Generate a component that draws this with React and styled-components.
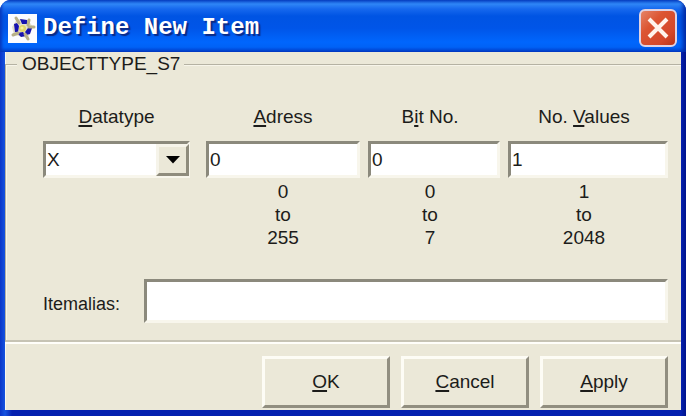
import React, { useState } from "react";
import styled, { createGlobalStyle } from "styled-components";

const GlobalStyle = createGlobalStyle`
  * {
    box-sizing: border-box;
  }

  body {
    margin: 0;
    background: #ffffff;
    color: #1c1c1a;
    font-family: "Liberation Sans", Arial, sans-serif;
    font-size: 19px;
    line-height: 24px;
  }

  input, select, button {
    font: inherit;
    color: inherit;
  }
`;

const columns = [
  { id: "address", label: ["", "A", "dress"], min: 0, max: 255 },
  { id: "bit", label: ["B", "i", "t No."], min: 0, max: 7, shifted: true },
  { id: "values", label: ["No. ", "V", "alues"], min: 1, max: 2048, shifted: true },
];

const actions = [
  ["", "O", "K"],
  ["", "C", "ancel"],
  ["", "A", "pply"],
];

const AccessText = ({ parts }) => (
  <span>
    {parts[0]}
    <Underlined>{parts[1]}</Underlined>
    {parts[2]}
  </span>
);

const AppIcon = () => (
  <svg width="29" height="29" viewBox="0 0 29 29" aria-hidden="true">
    <rect width="29" height="29" fill="#fbfcff" />
    <path d="M9 5 L20 6 L25 13 L20 24 L6 21 L4 13 Z" fill="#e4e0cc" />
    <path d="M12 5 L19 6 L20 10 L14 10 Z" fill="#1712b0" />
    <path d="M6 10 L9 9 L11 12 L10 18 L7 18 Z" fill="#1712b0" />
    <path d="M20 14 L24 14 L22 20 L18 21 L17 18 Z" fill="#1712b0" />
    <path d="M9 19 L15 18 L18 22 L13 23 Z" fill="#1712b0" />
    <path d="M8 4 L11 9 M21 6 L20 11 M26 13 L21 13 M20 25 L17 20 M5 21 L10 19" stroke="#b8b088" strokeWidth="3" strokeLinecap="round" />
    <circle cx="14.5" cy="14.5" r="3.5" fill="#e2d56c" />
    <circle cx="14" cy="14" r="1.6" fill="#f8f09c" />
  </svg>
);

const App = () => {
  const [datatype, setDatatype] = useState("X");
  const [values, setValues] = useState({ address: "0", bit: "0", values: "1" });
  const [alias, setAlias] = useState("");

  return (
    <>
      <GlobalStyle />
      <WindowStyled>
        <TitleBar>
          <AppIcon />
          <Title>Define New Item</Title>
          <CloseButton type="button" aria-label="Close">
            <svg width="22" height="22" viewBox="0 0 22 22">
              <path d="M2 2 L20 20 M20 2 L2 20" stroke="#fff4ec" strokeWidth="4" />
            </svg>
          </CloseButton>
        </TitleBar>

        <Body onSubmit={(e) => e.preventDefault()}>
          <Group>
            <Legend>OBJECTTYPE_S7</Legend>
            <Fields>
              <DatatypeField>
                <Label htmlFor="datatype">
                  <AccessText parts={["", "D", "atatype"]} />
                </Label>
                <SelectBox>
                  <Select id="datatype" value={datatype} onChange={(e) => setDatatype(e.target.value)}>
                    <option>X</option>
                    <option>B</option>
                    <option>W</option>
                    <option>D</option>
                  </Select>
                  <Arrow>
                    <svg width="14" height="8" viewBox="0 0 14 8">
                      <path d="M0 0 H14 L7 7.5 Z" fill="#000" />
                    </svg>
                  </Arrow>
                </SelectBox>
              </DatatypeField>

              {columns.map(({ id, label, min, max, shifted }) => (
                <Field key={id}>
                  <Label htmlFor={id} $shifted={shifted}>
                    <AccessText parts={label} />
                  </Label>
                  <TextBox id={id} value={values[id]} onChange={(e) => setValues({ ...values, [id]: e.target.value })} />
                  <Range $shifted={shifted}>
                    <span>{min}</span>
                    <span>to</span>
                    <span>{max}</span>
                  </Range>
                </Field>
              ))}
            </Fields>

            <AliasRow>
              <AliasLabel htmlFor="alias">Itemalias:</AliasLabel>
              <TextBox id="alias" $tall value={alias} onChange={(e) => setAlias(e.target.value)} />
            </AliasRow>
          </Group>

          <Footer>
            {actions.map((parts) => (
              <ActionButton type="button" key={parts[1]}>
                <AccessText parts={parts} />
              </ActionButton>
            ))}
          </Footer>
        </Body>
      </WindowStyled>
    </>
  );
};

const WindowStyled = styled.main`
  display: flex;
  flex-direction: column;
  min-height: 100vh;
  overflow: hidden;
  border-radius: 11px 11px 0 0;
  background: linear-gradient(90deg, #0a35c8 0, #1553e0 5px, #0420b0 12px, #0420b0 calc(100% - 5px), #00138a 100%);
`;

const TitleBar = styled.header`
  display: flex;
  align-items: center;
  height: 52px;
  padding: 4px 9px 0 8px;
  background: linear-gradient(
    180deg,
    #0a4cd0 0,
    #2f86f6 4px,
    #1668ee 9px,
    #0054e3 16px,
    #0055e8 28px,
    #0066fd 42px,
    #0062f6 47px,
    #0040cc 52px
  );
  box-shadow: inset 3px 0 3px -1px #0838bc, inset -4px 0 4px -1px #0027a0;
`;

const Title = styled.h1`
  flex: 1;
  margin: 0 0 0 6px;
  color: #ffffff;
  font-family: "Liberation Mono", "Courier New", monospace;
  font-size: 24px;
  font-weight: bold;
  line-height: 28px;
  text-shadow: 2px 2px 1px #0a2a86;
  white-space: nowrap;
`;

const CloseButton = styled.button`
  display: flex;
  align-items: center;
  justify-content: center;
  width: 38px;
  height: 38px;
  padding: 0;
  border: 2px solid #dfd3e4;
  border-radius: 6px;
  background: linear-gradient(135deg, #e58468 0%, #dc5532 35%, #d4472a 75%, #b8341a 100%);
`;

const Body = styled.form`
  flex: 1;
  margin: 0 5px 6px;
  padding-bottom: 2px;
  background: #ebe8d8;
  box-shadow: inset 1px 0 0 #f8f7ef;
`;

const Group = styled.fieldset`
  min-width: 0;
  margin: 0;
  padding: 29px 13px 17px 37px;
  border: 1px solid #b5b2a3;
  border-right: 0;
  border-bottom: 2px solid #c6c3b4;
  box-shadow: inset 1px 1px 0 #f7f5ea, 0 2px 0 #fffefa;
`;

const Legend = styled.legend`
  margin-left: -26px;
  padding: 0 4px 0 5px;
  background: #ebe8d8;
`;

const Fields = styled.div`
  display: grid;
  grid-template-columns: 155fr 154fr 132fr 160fr;
  gap: 8px;
`;

const Field = styled.div`
  display: flex;
  flex-direction: column;
  min-width: 0;
`;

const DatatypeField = styled(Field)`
  padding-right: 8px;
`;

const Label = styled.label`
  margin-bottom: 12px;
  padding-right: ${(props) => (props.$shifted ? "8px" : "0")};
  text-align: center;
  white-space: nowrap;
`;

const Underlined = styled.u`
  text-decoration-thickness: 2px;
  text-underline-offset: 2px;
  text-decoration-skip-ink: none;
`;

const TextBox = styled.input`
  width: 100%;
  min-width: 0;
  height: ${(props) => (props.$tall ? "44px" : "37px")};
  padding: 0 1px;
  border: 3px solid;
  border-color: #8b897c #f8f6ec #f8f6ec #8b897c;
  border-radius: 0;
  outline: none;
  background: #ffffff;
`;

const SelectBox = styled.div`
  display: grid;
  grid-template-columns: 1fr 34px;
`;

const Select = styled.select`
  grid-area: 1 / 1 / 2 / 3;
  appearance: none;
  height: 37px;
  padding: 0 1px;
  border: 3px solid;
  border-color: #8b897c #f8f6ec #f8f6ec #8b897c;
  border-radius: 0;
  outline: none;
  background: #ffffff;
`;

const Arrow = styled.span`
  grid-area: 1 / 2;
  display: flex;
  align-items: center;
  justify-content: center;
  margin: 3px 1px 2px 0;
  border: 3px solid;
  border-color: #f6f4ea #8f8c7d #8f8c7d #f6f4ea;
  background: #ebe8d8;
  pointer-events: none;
`;

const Range = styled.div`
  display: flex;
  flex-direction: column;
  margin-top: 2px;
  padding-right: ${(props) => (props.$shifted ? "8px" : "0")};
  line-height: 23px;
  text-align: center;
`;

const AliasRow = styled.div`
  display: flex;
  align-items: center;
  margin-top: 30px;
`;

const AliasLabel = styled.label`
  flex: 0 0 101px;
  padding-top: 6px;
  font-size: 18px;
`;

const Footer = styled.footer`
  display: flex;
  justify-content: flex-end;
  gap: 11px;
  padding: 14px 13px 0;
`;

const ActionButton = styled.button`
  width: 128px;
  height: 52px;
  padding: 0;
  border: 3px solid;
  border-color: #fdfcf5 #918e80 #918e80 #fdfcf5;
  background: #ebe8d8;
`;

export default App;
